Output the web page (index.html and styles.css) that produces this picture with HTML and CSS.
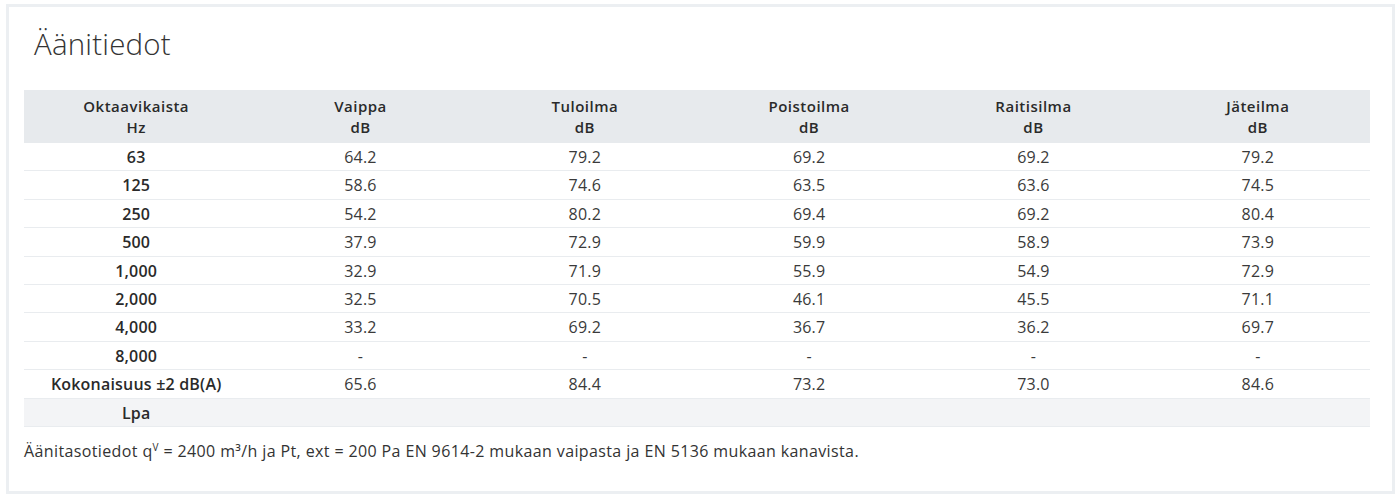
FILE: index.html
```html
<!DOCTYPE html>
<html lang="fi">
<head>
<meta charset="utf-8">
<title>Äänitiedot</title>
<link rel="stylesheet" href="styles.css">
</head>
<body>
<section class="card">
  <h2 class="title">Äänitiedot</h2>
  <table class="sound">
    <thead>
      <tr><th>Oktaavikaista<br>Hz</th><th>Vaippa<br>dB</th><th>Tuloilma<br>dB</th><th>Poistoilma<br>dB</th><th>Raitisilma<br>dB</th><th>Jäteilma<br>dB</th></tr>
    </thead>
    <tbody>
      <tr><th>63</th><td>64.2</td><td>79.2</td><td>69.2</td><td>69.2</td><td>79.2</td></tr>
      <tr><th>125</th><td>58.6</td><td>74.6</td><td>63.5</td><td>63.6</td><td>74.5</td></tr>
      <tr><th>250</th><td>54.2</td><td>80.2</td><td>69.4</td><td>69.2</td><td>80.4</td></tr>
      <tr><th>500</th><td>37.9</td><td>72.9</td><td>59.9</td><td>58.9</td><td>73.9</td></tr>
      <tr><th>1,000</th><td>32.9</td><td>71.9</td><td>55.9</td><td>54.9</td><td>72.9</td></tr>
      <tr><th>2,000</th><td>32.5</td><td>70.5</td><td>46.1</td><td>45.5</td><td>71.1</td></tr>
      <tr><th>4,000</th><td>33.2</td><td>69.2</td><td>36.7</td><td>36.2</td><td>69.7</td></tr>
      <tr><th>8,000</th><td>-</td><td>-</td><td>-</td><td>-</td><td>-</td></tr>
      <tr><th>Kokonaisuus ±2 dB(A)</th><td>65.6</td><td>84.4</td><td>73.2</td><td>73.0</td><td>84.6</td></tr>
      <tr class="shaded"><th>Lpa</th><td></td><td></td><td></td><td></td><td></td></tr>
    </tbody>
  </table>
  <p class="note">Äänitasotiedot q<sup>V</sup> = 2400 m³/h ja Pt, ext = 200 Pa EN 9614-2 mukaan vaipasta ja EN 5136 mukaan kanavista.</p>
</section>
</body>
</html>
```
FILE: styles.css
```css
html, body {
  margin: 0;
  padding: 0;
  background: #ffffff;
}
body {
  padding: 4px 5px 4px 6px;
  font-family: "Open Sans", "Liberation Sans", sans-serif;
  color: #2e2e2e;
}
.card {
  border: 3px solid #eceff2;
  height: 490px;
  box-sizing: border-box;
  padding: 0 20px 0 15px;
}
.title {
  margin: 0;
  padding: 17px 0 0 10px;
  height: 64px;
  box-sizing: border-box;
  font-weight: 300;
  font-size: 29.5px;
  line-height: 40px;
  color: #333;
  letter-spacing: 0.2px;
}
.sound {
  width: 1346px;
  border-collapse: collapse;
  table-layout: fixed;
  margin-top: 19px;
  font-size: 16px;
  letter-spacing: 0.2px;
}
.sound thead th {
  background: #e7eaed;
  font-size: 15px;
  letter-spacing: 0.5px;
  font-weight: 600;
  line-height: 20.5px;
  padding: 6px 0 6px;
  text-align: center;
  color: #2a2a2a;
}
.sound tbody th,
.sound tbody td {
  text-align: center;
  padding: 5px 0 4px;
  line-height: 18.4px;
  border-bottom: 1px solid #e9ecef;
  height: 18.4px;
}
.sound tbody th {
  font-weight: 600;
  color: #2a2a2a;
}
.sound tbody td {
  font-weight: 400;
  color: #3a3a3a;
}
.sound tr.shaded th,
.sound tr.shaded td {
  background: #f3f4f6;
}
.note {
  margin: 13px 0 0;
  font-size: 16px;
  color: #333;
  letter-spacing: 0.38px;
}
.note sup {
  font-size: 10px;
  vertical-align: 6px;
  line-height: 0;
}
```
